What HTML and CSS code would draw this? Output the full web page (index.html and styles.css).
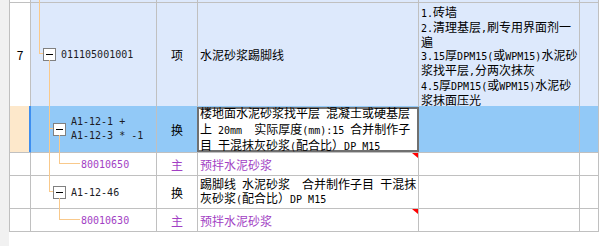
FILE: index.html
```html
<!DOCTYPE html>
<html>
<head>
<meta charset="utf-8">
<title>清单定额</title>
<link rel="stylesheet" href="styles.css">
</head>
<body>
<div class="page">
  <div class="gutter"></div>
  <div class="grid">
    <div class="row row-prev">
      <div class="c num"></div>
      <div class="c tree"><i class="ln v up"></i></div>
      <div class="c unit"></div>
      <div class="c name"></div>
      <div class="c desc"></div>
      <div class="c last"></div>
    </div>

    <div class="row row-item">
      <div class="c num"><div class="tx">7</div></div>
      <div class="c tree lvl1">
        <i class="ln v up"></i><i class="ln h elbow"></i><i class="ln v down"></i>
        <span class="tog"></span>
        <div class="tx m code">011105001001</div>
      </div>
      <div class="c unit"><div class="tx">项</div></div>
      <div class="c name"><div class="tx">水泥砂浆踢脚线</div></div>
      <div class="c desc"><div class="tx"><span class="m">1.</span>砖墙<br><span class="m">2.</span>清理基层<span class="m">,</span>刷专用界面剂一<br>遍<br><span class="m">3.15</span>厚<span class="m">DPM15(</span>或<span class="m">WPM15)</span>水泥砂<br>浆找平层<span class="m">,</span>分两次抹灰<br><span class="m">4.5</span>厚<span class="m">DPM15(</span>或<span class="m">WPM15)</span>水泥砂<br>浆抹面压光</div></div>
      <div class="c last"></div>
    </div>

    <div class="row row-sel">
      <div class="c num"></div>
      <div class="c tree lvl2">
        <i class="ln v trunk"></i><i class="ln h elbow"></i><i class="ln v down"></i>
        <span class="tog"></span>
        <div class="tx m code two">A1-12-1 +<br>A1-12-3 * -1</div>
      </div>
      <div class="c unit"><div class="tx">换</div></div>
      <div class="c name">
        <div class="editor"><div class="tx">楼地面水泥砂浆找平层<span class="m"> </span>混凝土或硬基层<br>上<span class="m"> 20mm&nbsp; </span>实际厚度<span class="m">(mm):15 </span>合并制作子<br>目<span class="m"> </span>干混抹灰砂浆<span class="m">(</span>配合比）<span class="m">DP M15</span></div></div>
      </div>
      <div class="c desc"></div>
      <div class="c last"></div>
    </div>

    <div class="row row-leaf row-leaf1">
      <div class="c num"></div>
      <div class="c tree leaf">
        <i class="ln v trunk"></i><i class="ln v up2"></i><i class="ln h branch"></i>
        <div class="tx m pur">80010650</div>
      </div>
      <div class="c unit pur"><div class="tx">主</div></div>
      <div class="c name pur"><div class="tx">预拌水泥砂浆</div><i class="flag"></i></div>
      <div class="c desc"></div>
      <div class="c last"></div>
    </div>

    <div class="row row-sub">
      <div class="c num"></div>
      <div class="c tree lvl2">
        <i class="ln v up"></i><i class="ln h elbow"></i><i class="ln v down"></i>
        <span class="tog"></span>
        <div class="tx m code">A1-12-46</div>
      </div>
      <div class="c unit"><div class="tx">换</div></div>
      <div class="c name"><div class="tx">踢脚线<span class="m"> </span>水泥砂浆<span class="m">&nbsp; </span>合并制作子目<span class="m"> </span>干混抹<br>灰砂浆<span class="m">(</span>配合比）<span class="m">DP M15</span></div></div>
      <div class="c desc"></div>
      <div class="c last"></div>
    </div>

    <div class="row row-leaf row-leaf2">
      <div class="c num"></div>
      <div class="c tree leaf">
        <i class="ln v up2"></i><i class="ln h branch"></i>
        <div class="tx m pur">80010630</div>
      </div>
      <div class="c unit pur"><div class="tx">主</div></div>
      <div class="c name pur"><div class="tx">预拌水泥砂浆</div><i class="flag"></i></div>
      <div class="c desc"></div>
      <div class="c last"></div>
    </div>
  </div>
</div>
</body>
</html>
```

FILE: styles.css
```css
* { box-sizing: border-box; }
html, body { margin: 0; padding: 0; background: #fff; }
body {
  width: 599px;
  height: 246px;
  overflow: hidden;
  font-family: "Noto Sans CJK SC", "Noto Sans", sans-serif;
  font-size: 12px;
  line-height: 13px;
  color: #000;
}
.page { display: flex; height: 246px; }
.gutter { width: 9px; flex: none; background: #f1f1f1; }
.grid { flex: 1; align-self: flex-start; border-left: 1px solid #c0c0c0; min-width: 0; }

.row { display: grid; grid-template-columns: 21px 126px 41px 221px 161px 1fr; }
.c {
  position: relative;
  display: flex;
  align-items: center;
  min-width: 0;
  white-space: nowrap;
  border-right: 1px solid #c0c0c0;
  border-bottom: 1px solid #c0c0c0;
  background: #fff;
}
.row-prev { height: 3px; }
.row-item { height: 103px; }
.row-sel { height: 47px; }
.row-leaf { height: 23px; }
.row-sub { height: 33px; }

.row-prev .c:not(.num), .row-item .c:not(.num) { background: #dde9fc; }
.row-sel .c { background: #92c9f7; }
.row-sel .num { background: #fde8cb; border-right-color: #3d8ef0; box-shadow: inset -1px 0 #3d8ef0; }

.num { justify-content: center; }
.unit { justify-content: center; }
.name { padding-left: 2px; }
.desc { padding: 2px 0 0 2px; align-items: flex-start; }
.row-sub .name .tx { line-height: 12px; }

.m { font-family: "DejaVu Sans Mono", "Liberation Mono", monospace; font-size: 10px; }
.code { color: #1c1c24; }
.code.two { line-height: 14px; }
.pur { color: #a23fc4; }

.lvl1 { padding-left: 12px; }
.lvl2 { padding-left: 22px; }
.leaf { padding-left: 50px; }

.tog {
  position: relative;
  flex: none;
  width: 13px;
  height: 13px;
  margin-right: 5px;
  border: 1px solid #808080;
  background: #fff;
}
.tog::after {
  content: "";
  position: absolute;
  left: 2px;
  top: 5px;
  width: 7px;
  height: 1px;
  background: #000;
}

.ln { position: absolute; background: #f9c98b; z-index: 1; }
.ln.v { width: 1px; }
.ln.h { height: 1px; }

.row-prev .up { left: 8px; top: 0; bottom: -1px; }
.row-item .up { left: 8px; top: 0; height: 51px; }
.row-item .elbow { left: 8px; top: 50px; width: 4px; }
.row-item .down { left: 18px; top: 57px; bottom: -1px; }

.row-sel .trunk, .row-leaf1 .trunk { left: 18px; top: 0; bottom: -1px; }
.row-sel .elbow { left: 18px; top: 22px; width: 4px; }
.row-sel .down { left: 28px; top: 29px; bottom: -1px; }

.row-leaf .up2 { left: 28px; top: 0; height: 11px; }
.row-leaf .branch { left: 28px; top: 10px; width: 21px; }

.row-sub .up { left: 18px; top: 0; height: 16px; }
.row-sub .elbow { left: 18px; top: 15px; width: 4px; }
.row-sub .down { left: 28px; top: 22px; bottom: -1px; }

.editor {
  position: absolute;
  left: -1px;
  right: -1px;
  top: 1px;
  bottom: 0;
  display: flex;
  align-items: center;
  padding-left: 1px;
  line-height: 14px;
  color: #000;
  background: #fff;
  border: 2px solid #707070;
  z-index: 2;
}

.flag {
  position: absolute;
  right: 0;
  top: 0;
  width: 0;
  height: 0;
  border-top: 5px solid #ff0000;
  border-left: 6px solid transparent;
}
```
